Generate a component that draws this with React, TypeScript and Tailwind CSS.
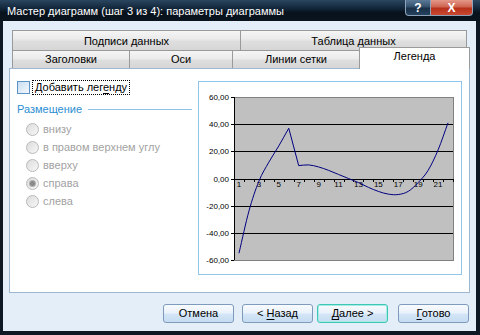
import React from "react";

const vals = [-55, -24, -2, 12, 24, 37, 9.5, 10, 8.5, 6, 3, 0, -3, -6.5, -9.5, -11.5, -11.8, -9.5, -3, 6, 21, 41];

const X0 = 234;
const X1 = 453;
const Y0 = 97;
const Y1 = 260;
const STEP = (X1 - X0) / 22;
const yOf = (v: number) => 178.5 - (v * (Y1 - Y0)) / 120;

function curvePath() {
  const pts = vals.map((v, i) => [X0 + (i + 0.5) * STEP, yOf(v)]);
  const n = pts.length;
  const corners = new Set([5, 6]);
  const sub = (a: number[], b: number[]) => [a[0] - b[0], a[1] - b[1]];
  const tin = (i: number) => {
    if (i === n - 1 || corners.has(i)) return sub(pts[i], pts[i - 1]);
    const d = sub(pts[i + 1], pts[i - 1]);
    return [d[0] / 2, d[1] / 2];
  };
  const tout = (i: number) => {
    if (i === 0 || corners.has(i)) return sub(pts[i + 1], pts[i]);
    const d = sub(pts[i + 1], pts[i - 1]);
    return [d[0] / 2, d[1] / 2];
  };
  let d = `M${pts[0][0].toFixed(2)},${pts[0][1].toFixed(2)}`;
  for (let i = 0; i < n - 1; i++) {
    const o = tout(i);
    const t = tin(i + 1);
    const c1 = [pts[i][0] + o[0] / 3, pts[i][1] + o[1] / 3];
    const c2 = [pts[i + 1][0] - t[0] / 3, pts[i + 1][1] - t[1] / 3];
    d += ` C${c1[0].toFixed(2)},${c1[1].toFixed(2)} ${c2[0].toFixed(2)},${c2[1].toFixed(2)} ${pts[i + 1][0].toFixed(2)},${pts[i + 1][1].toFixed(2)}`;
  }
  return d;
}

function Chart() {
  const grid = [60, 40, 20, 0, -20, -40, -60];
  const labels = ["60,00", "40,00", "20,00", "0,00", "-20,00", "-40,00", "-60,00"];
  return (
    <svg width={262} height={192} viewBox="199 82 262 192" className="block">
      <rect x={X0} y={Y0} width={X1 - X0} height={Y1 - Y0} fill="#c0c0c0" stroke="#808080" strokeWidth={1} shapeRendering="crispEdges" />
      {grid.slice(1, 6).map((g) => (
        <line key={g} x1={X0} x2={X1} y1={Math.round(yOf(g)) + 0.5} y2={Math.round(yOf(g)) + 0.5} stroke="#000" strokeWidth={1} shapeRendering="crispEdges" />
      ))}
      <line x1={X0 + 0.5} x2={X0 + 0.5} y1={Y0} y2={Y1} stroke="#000" shapeRendering="crispEdges" />
      {grid.map((g) => (
        <line key={"t" + g} x1={X0 - 3} x2={X0} y1={Math.round(yOf(g)) + 0.5} y2={Math.round(yOf(g)) + 0.5} stroke="#000" shapeRendering="crispEdges" />
      ))}
      {Array.from({ length: 23 }).map((_, k) => (
        <line key={"x" + k} x1={Math.round(X0 + k * STEP) + 0.5} x2={Math.round(X0 + k * STEP) + 0.5} y1={179} y2={182} stroke="#000" shapeRendering="crispEdges" />
      ))}
      {labels.map((l, i) => (
        <text key={l} x={229} y={Math.round(yOf(grid[i])) + 3} fontSize={8} textAnchor="end" fill="#000" fontFamily="'Liberation Sans', Arial, sans-serif">
          {l}
        </text>
      ))}
      {Array.from({ length: 11 }).map((_, k) => (
        <text key={"l" + k} x={X0 + (2 * k + 0.5) * STEP} y={187} fontSize={8} textAnchor="middle" fill="#000" fontFamily="'Liberation Sans', Arial, sans-serif">
          {2 * k + 1}
        </text>
      ))}
      <path d={curvePath()} fill="none" stroke="#000080" strokeWidth={1} />
    </svg>
  );
}

function Tab({ w, label, first, selected }: { w: string; label: string; first?: boolean; selected?: boolean }) {
  if (selected) {
    return (
      <div className={`${w} -ml-px relative z-10 h-[22px] bg-white border border-b-0 border-[#9a9a9a] flex items-start justify-center pt-[3px]`}>
        <span>{label}</span>
      </div>
    );
  }
  return (
    <div
      className={`${w} ${first ? "" : "-ml-px"} mt-[3px] h-[18px] border border-b-0 border-[#9a9a9a] bg-[linear-gradient(to_bottom,#f5f5f5_0%,#ebebeb_45%,#dedede_55%,#d6d6d6_100%)] flex items-center justify-center`}
    >
      <span>{label}</span>
    </div>
  );
}

function Radio({ checked, label }: { checked?: boolean; label: string }) {
  return (
    <div className="h-[18px] flex items-center">
      <div className="ml-[9px] w-[13px] h-[13px] rounded-full border border-[#b9b9b9] bg-[linear-gradient(135deg,#dcdcdc,#f7f7f7)] flex items-center justify-center">
        {checked && <div className="w-[5px] h-[5px] rounded-full bg-[#8a8a8a] shadow-[0_0_0_1px_#b0b0b0]" />}
      </div>
      <span className="ml-[4px] text-[#a2a2a2]">{label}</span>
    </div>
  );
}

function Btn({ children, focused }: { children: React.ReactNode; focused?: boolean }) {
  return (
    <div
      className={`w-[71px] h-[19px] rounded-[3px] border flex items-center justify-center ${
        focused ? "border-[#3cc7b6] shadow-[inset_0_0_0_1px_#a6ece3]" : "border-[#7f9bbb]"
      } bg-[linear-gradient(to_bottom,#f8fbfe_0%,#eaf2fb_45%,#d3e5f6_55%,#c6dcf2_100%)]`}
    >
      {children}
    </div>
  );
}

export default function App() {
  return (
    <div
      className="w-[480px] h-[335px] flex flex-col bg-[#0d1824] overflow-hidden text-[11px] leading-none text-black"
      style={{ fontFamily: "'Liberation Sans', Arial, sans-serif" }}
    >
      {/* Title bar */}
      <div className="h-[21px] shrink-0 flex items-start justify-between bg-[linear-gradient(to_bottom,#2a4660_0%,#12263a_40%,#08121c_60%,#0a141f_100%)]">
        <div className="pl-[7px] pt-[6px] text-white text-[11px]">Мастер диаграмм (шаг 3 из 4): параметры диаграммы</div>
        <div className="flex mr-[7px]">
          <div className="w-[26px] h-[16px] rounded-bl-[4px] border border-t-0 border-[#8fa3b8] bg-[linear-gradient(to_bottom,#5b7a98_0%,#34506c_45%,#1a3148_55%,#24425e_100%)] flex items-center justify-center text-white font-bold text-[12px]">
            ?
          </div>
          <div className="w-[43px] h-[16px] -ml-px rounded-br-[4px] border border-t-0 border-[#8fa3b8] bg-[linear-gradient(to_bottom,#e4988a_0%,#cf6450_45%,#b8301a_55%,#c84a32_100%)] flex items-center justify-center text-white font-bold text-[12px]">
            X
          </div>
        </div>
      </div>

      {/* Body */}
      <div className="flex-1 ml-[3px] mr-[4px] mb-[4px] bg-[#e4eef9] flex flex-col">
        {/* Tabs row 1 */}
        <div className="mt-[9px] ml-[9px] flex h-[20px]">
          <div className="w-[229px] h-[20px] border border-b-0 border-[#9a9a9a] bg-[linear-gradient(to_bottom,#f5f5f5_0%,#ebebeb_40%,#dedede_55%,#d6d6d6_100%)] flex justify-center pt-[5px]">
            <span>Подписи данных</span>
          </div>
          <div className="w-[227px] -ml-px h-[20px] border border-b-0 border-[#9a9a9a] bg-[linear-gradient(to_bottom,#f5f5f5_0%,#ebebeb_40%,#dedede_55%,#d6d6d6_100%)] flex justify-center pt-[5px]">
            <span>Таблица данных</span>
          </div>
        </div>
        {/* Tabs row 2 */}
        <div className="-mt-[3px] ml-[9px] flex items-start h-[21px]">
          <Tab w="w-[118px]" label="Заголовки" first />
          <Tab w="w-[104px]" label="Оси" />
          <Tab w="w-[128px]" label="Линии сетки" />
          <Tab w="w-[111px]" label="Легенда" selected />
        </div>

        {/* Panel */}
        <div className="ml-[6px] w-[461px] h-[225px] bg-white border border-[#9db7d1] flex">
          <div className="w-[188px] pl-[7px] pr-[6px] pt-[11px] flex flex-col">
            <div className="h-[15px] flex items-center">
              <div className="w-[13px] h-[13px] border border-[#5b93c9] bg-[linear-gradient(135deg,#c9def2,#f3f8fd)]" />
              <div className="ml-[2px] h-[15px] px-[2px] border border-dotted border-black flex items-center">
                <span>
                  Добавить лег<span className="underline underline-offset-2">е</span>нду
                </span>
              </div>
            </div>
            <div className="mt-[7px] h-[14px] flex items-center">
              <span className="text-[#2a8ed3]">Размещение</span>
              <div className="flex-1 ml-[6px] h-px bg-[#8cc2ea]" />
            </div>
            <div className="mt-[4px] flex flex-col">
              <Radio label="внизу" />
              <Radio label="в правом верхнем углу" />
              <Radio label="вверху" />
              <Radio label="справа" checked />
              <Radio label="слева" />
            </div>
          </div>
          <div className="mt-[12px] w-[264px] h-[194px] border border-[#91c6ec] bg-white">
            <Chart />
          </div>
        </div>

        {/* Buttons */}
        <div className="mt-[11px] flex ml-[160px]">
          <Btn>Отмена</Btn>
          <div className="ml-[8px]">
            <Btn>
              <span>
                &lt; <span className="underline underline-offset-2">Н</span>азад
              </span>
            </Btn>
          </div>
          <div className="ml-[4px]">
            <Btn focused>
              <span>
                <span className="underline underline-offset-2">Д</span>алее &gt;
              </span>
            </Btn>
          </div>
          <div className="ml-[10px]">
            <Btn>
              <span>
                <span className="underline underline-offset-2">Г</span>отово
              </span>
            </Btn>
          </div>
        </div>
      </div>
    </div>
  );
}
